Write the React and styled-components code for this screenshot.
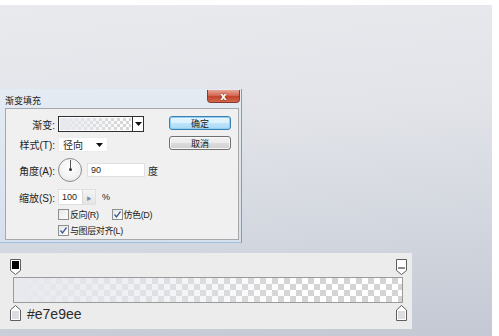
import React from "react";
import styled, { createGlobalStyle } from "styled-components";

const Global = createGlobalStyle`
  html, body { margin: 0; padding: 0; background: #ffffff; }
  body { font-family: "Liberation Sans", "Noto Sans CJK SC", sans-serif; }
`;

const Canvas = styled.div`
  width: 492px;
  height: 331px;
  margin-top: 5px;
  box-sizing: border-box;
  padding-top: 84px;
  display: flex;
  flex-direction: column;
  align-items: flex-start;
  background: linear-gradient(175deg, #e9eaee 0%, #e2e4e9 35%, #d2d6de 70%, #c3c8d3 100%);
  overflow: hidden;
`;

const Dialog = styled.div`
  width: 242px;
  box-sizing: border-box;
  padding: 0 2px 2px 5px;
  background: linear-gradient(180deg, #e4ebf3 0%, #d6e0ec 100%);
  border-right: 1px solid #8d99a8;
  border-bottom: 1px solid #9fc0e0;
  display: flex;
  flex-direction: column;
`;

const TitleBar = styled.div`
  height: 19px;
  display: flex;
  align-items: flex-start;
  justify-content: space-between;
`;

const Title = styled.span`
  font-size: 9px;
  line-height: 9px;
  margin-top: 7px;
  color: #1a1a1a;
  font-family: "Noto Sans CJK SC", sans-serif;
`;

const CloseButton = styled.div`
  width: 31px;
  height: 12px;
  margin-top: 1px;
  margin-right: -1px;
  border: 1px solid #8a3a2c;
  border-top: none;
  border-radius: 0 0 4px 4px;
  background: linear-gradient(180deg, #e8a595 0%, #d46b55 45%, #c2432c 55%, #cf6a50 100%);
  display: flex;
  align-items: center;
  justify-content: center;
  color: #fff;
  font-size: 10px;
  font-weight: bold;
  font-family: "DejaVu Sans", sans-serif;
  text-shadow: 0 0 2px #6a1a10;
`;

const Panel = styled.div`
  height: 132px;
  box-sizing: border-box;
  border: 1px solid #a5a9ae;
  background: #f0f0f0;
  display: flex;
  padding-top: 7px;
`;

const Form = styled.div`
  width: 163px;
  display: flex;
  flex-direction: column;
`;

const Row = styled.div`
  display: flex;
  align-items: center;
  height: ${(p) => p.$h}px;
  margin-top: ${(p) => p.$mt || 0}px;
`;

const Label = styled.span`
  width: 49px;
  margin-right: 3px;
  text-align: right;
  font-size: 10px;
  color: #1e1e1e;
  white-space: nowrap;
`;

const Text = styled.span`
  font-size: ${(p) => p.$fs || 9}px;
  letter-spacing: ${(p) => p.$ls || 0}px;
  color: #1e1e1e;
  margin-left: ${(p) => p.$ml || 0}px;
  white-space: nowrap;
`;

const checker = `conic-gradient(#d4d4d4 90deg, #ffffff 90deg 180deg, #d4d4d4 180deg 270deg, #ffffff 270deg)`;

const Swatch = styled.div`
  width: 86px;
  height: 16px;
  box-sizing: border-box;
  border: 1px solid #2e2e2e;
  display: flex;
  background: #fff;
`;

const SwatchFill = styled.div`
  flex: 1;
  margin: 1px;
  background-image: linear-gradient(to right, rgba(231, 233, 238, 1) 0%, rgba(231, 233, 238, 0) 100%), ${checker};
  background-size: 100% 100%, 6px 6px;
`;

const SwatchArrow = styled.div`
  width: 10px;
  border-left: 1px solid #2e2e2e;
  display: flex;
  align-items: center;
  justify-content: center;
`;

const Select = styled.div`
  width: 50px;
  height: 15px;
  box-sizing: border-box;
  background: #fff;
  border: 1px solid #ececec;
  display: flex;
  align-items: center;
  justify-content: space-between;
  padding: 0 4px 0 4px;
  font-size: 10px;
  color: #1e1e1e;
  font-family: "Noto Sans CJK SC", sans-serif;
`;

const Dial = styled.div`
  width: 24px;
  height: 24px;
  box-sizing: border-box;
  border-radius: 50%;
  border: 1px solid #8c8c8c;
  background: radial-gradient(circle at 50% 40%, #ffffff 0%, #f2f2f2 60%, #dcdcdc 100%);
  display: flex;
  justify-content: center;
`;

const DialHand = styled.div`
  width: 1px;
  height: 10px;
  margin-top: 1px;
  background: #555;
  position: relative;
  &::after {
    content: "";
    position: absolute;
    left: -1px;
    bottom: -1px;
    width: 3px;
    height: 3px;
    border-radius: 50%;
    background: #333;
  }
`;

const Input = styled.div`
  width: ${(p) => p.$w}px;
  height: ${(p) => p.$h}px;
  margin-left: ${(p) => p.$ml || 0}px;
  box-sizing: border-box;
  background: #fff;
  border: 1px solid #e0e0e0;
  display: flex;
  align-items: center;
  padding-left: 3px;
  font-size: 9px;
  color: #1e1e1e;
`;

const Spin = styled.div`
  margin-left: auto;
  width: 12px;
  height: 100%;
  background: linear-gradient(180deg, #f4f4f4, #e4e4e4);
  border-left: 1px solid #d8d8d8;
  display: flex;
  align-items: center;
  justify-content: center;
  font-size: 5px;
  color: #7a8aa8;
`;

const Check = styled.div`
  width: 11px;
  height: 11px;
  box-sizing: border-box;
  border: 1px solid #8e8f8f;
  background: linear-gradient(135deg, #e6e6e6 0%, #ffffff 100%);
  display: flex;
  align-items: center;
  justify-content: center;
`;

const CheckItem = styled.div`
  display: flex;
  align-items: center;
  margin-left: ${(p) => p.$ml || 0}px;
`;

const Buttons = styled.div`
  display: flex;
  flex-direction: column;
  gap: 6px;
`;

const Button = styled.div`
  width: 62px;
  height: 14px;
  box-sizing: border-box;
  border-radius: 3px;
  border: 1px solid ${(p) => (p.$primary ? "#3c7fb1" : "#707070")};
  background: ${(p) =>
    p.$primary
      ? "linear-gradient(180deg, #eaf6fd 0%, #d9f0fc 50%, #bee6fd 51%, #a7d9f5 100%)"
      : "linear-gradient(180deg, #f2f2f2 0%, #ebebeb 50%, #dddddd 51%, #cfcfcf 100%)"};
  box-shadow: inset 0 0 0 1px ${(p) => (p.$primary ? "#8fd0f3" : "#f8f8f8")};
  display: flex;
  align-items: center;
  justify-content: center;
  font-size: 9px;
  color: #1a1a1a;
  font-family: "Noto Sans CJK SC", sans-serif;
`;

const GradientPanel = styled.div`
  margin-top: 10px;
  width: 412px;
  height: 76px;
  box-sizing: border-box;
  background: #ececec;
  padding: 6px 5px 0 10px;
  display: flex;
  flex-direction: column;
`;

const StopRow = styled.div`
  display: flex;
  align-items: flex-end;
  height: 16px;
  margin-top: ${(p) => p.$mt || 0}px;
`;

const Spacer = styled.div`
  flex: 1;
`;

const Bar = styled.div`
  margin-top: 2px;
  margin-left: 3px;
  width: 390px;
  height: 26px;
  box-sizing: border-box;
  border: 1px solid #9b9b9b;
  background-image: linear-gradient(to right, rgba(231, 233, 238, 1) 0%, rgba(231, 233, 238, 0.6) 35%, rgba(231, 233, 238, 0) 75%), ${checker};
  background-size: 100% 100%, 12px 12px;
`;

const HexText = styled.span`
  margin-left: 6px;
  font-size: 14px;
  line-height: 16px;
  color: #2b2b2b;
  font-family: "Liberation Sans", sans-serif;
  position: relative;
  top: 1px;
`;

function TopStop({ inner, band }) {
  return (
    <svg width="11" height="16" viewBox="0 0 11 16">
      <path d="M0.5 0.5 H10.5 V11.5 L5.5 15.5 L0.5 11.5 Z" fill="#ffffff" stroke="#5e5e5e" />
      <rect x="2" y="2" width="7" height="8" fill={inner} />
      {band && <rect x="2" y="8" width="7" height="2" fill="#8c8c8c" />}
    </svg>
  );
}

function BottomStop() {
  return (
    <svg width="11" height="16" viewBox="0 0 11 16">
      <path d="M5.5 0.5 L10.5 5 V15.5 H0.5 V5 Z" fill="#ffffff" stroke="#5e5e5e" />
      <rect x="2" y="6" width="7" height="8" fill="#dcdde2" />
    </svg>
  );
}

function CheckMark() {
  return (
    <svg width="9" height="9" viewBox="0 0 9 9">
      <path d="M1.5 4.5 L3.5 7 L7.5 1.5" fill="none" stroke="#3d5a9c" strokeWidth="1.3" />
    </svg>
  );
}

function Caret() {
  return (
    <svg width="7" height="4" viewBox="0 0 7 4">
      <path d="M0 0 H7 L3.5 4 Z" fill="#111" />
    </svg>
  );
}

export default function App() {
  return (
    <>
      <Global />
      <Canvas>
        <Dialog>
          <TitleBar>
            <Title>渐变填充</Title>
            <CloseButton>x</CloseButton>
          </TitleBar>
          <Panel>
            <Form>
              <Row $h={16}>
                <Label>渐变:</Label>
                <Swatch>
                  <SwatchFill />
                  <SwatchArrow>
                    <Caret />
                  </SwatchArrow>
                </Swatch>
              </Row>
              <Row $h={15} $mt={5}>
                <Label>样式(T):</Label>
                <Select>
                  径向
                  <Caret />
                </Select>
              </Row>
              <Row $h={24} $mt={6}>
                <Label>角度(A):</Label>
                <Dial>
                  <DialHand />
                </Dial>
                <Input $w={58} $h={14} $ml={5}>90</Input>
                <Text $ml={3} $fs={10}>度</Text>
              </Row>
              <Row $h={16} $mt={7}>
                <Label>缩放(S):</Label>
                <Input $w={38} $h={16}>
                  100
                  <Spin>▶</Spin>
                </Input>
                <Text $ml={6}>%</Text>
              </Row>
              <Row $h={12} $mt={3}>
                <Label />
                <CheckItem>
                  <Check />
                  <Text $ml={1} $ls={-0.4}>反向(R)</Text>
                </CheckItem>
                <CheckItem $ml={13}>
                  <Check>
                    <CheckMark />
                  </Check>
                  <Text $ml={1} $ls={-0.4}>仿色(D)</Text>
                </CheckItem>
              </Row>
              <Row $h={12} $mt={4}>
                <Label />
                <CheckItem>
                  <Check>
                    <CheckMark />
                  </Check>
                  <Text $ml={1} $ls={-0.4}>与图层对齐(L)</Text>
                </CheckItem>
              </Row>
            </Form>
            <Buttons>
              <Button $primary>确定</Button>
              <Button>取消</Button>
            </Buttons>
          </Panel>
        </Dialog>
        <GradientPanel>
          <StopRow>
            <TopStop inner="#000000" />
            <Spacer />
            <TopStop inner="#ffffff" band />
          </StopRow>
          <Bar />
          <StopRow $mt={2}>
            <BottomStop />
            <HexText>#e7e9ee</HexText>
            <Spacer />
            <BottomStop />
          </StopRow>
        </GradientPanel>
      </Canvas>
    </>
  );
}
